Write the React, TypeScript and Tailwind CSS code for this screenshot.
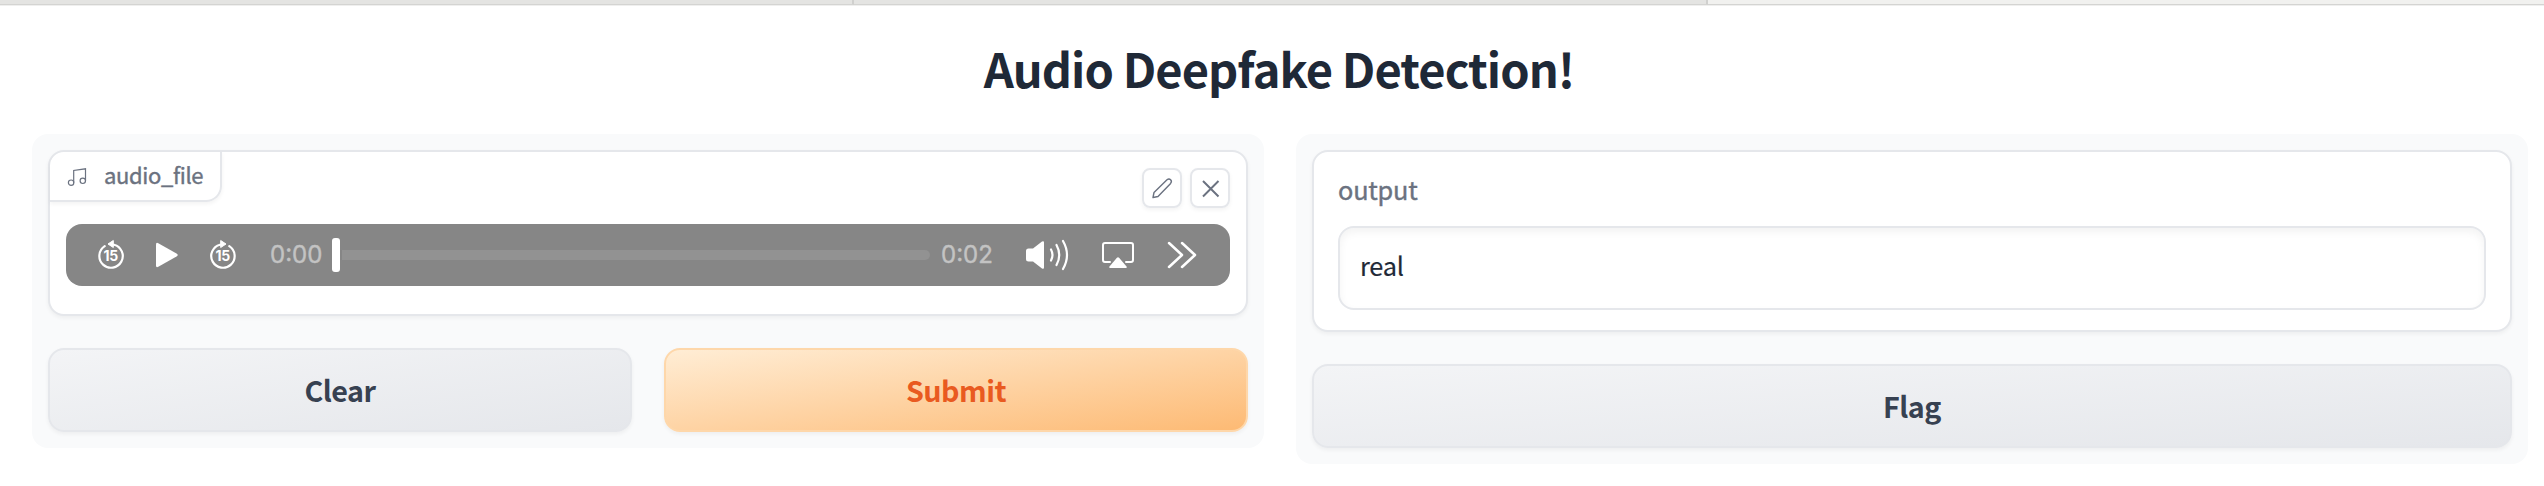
import React from "react";

const sans = "font-['Noto_Sans_CJK_JP','Noto_Sans',sans-serif]";
const card = "rounded-2xl border-2 border-[#e5e7eb] bg-white shadow-[0_2px_4px_rgba(0,0,0,0.05)]";
const button = "flex h-[84px] flex-1 items-center justify-center rounded-2xl border-2 text-[28.7px] font-bold leading-none tracking-[-0.5px] shadow-[0_2px_4px_rgba(0,0,0,0.05)]";
const grayButton = "border-[#e5e7eb] bg-[linear-gradient(to_bottom_right,#f3f4f6,#e5e7eb)] text-[#374151]";
const iconButton = "flex size-10 items-center justify-center rounded-lg border-2 border-[#e5e7eb] shadow-[0_2px_4px_rgba(0,0,0,0.05)]";
const time = "w-[52px] whitespace-nowrap font-[Inter,sans-serif] text-[24px] leading-none text-[#c3c3c3] [-webkit-text-stroke:0.4px]";

function MusicIcon() {
  return (
    <svg className="ml-[16px] size-6" viewBox="0 0 24 24" fill="none" stroke="#6b7280" strokeWidth="1.2">
      <path d="M7.700 18.700V6.500l11.800-1.700v12" />
      <circle cx="5.100" cy="18.700" r="2.700" />
      <circle cx="16.800" cy="16.800" r="2.700" />
    </svg>
  );
}

function SkipIcon({ forward = false }: { forward?: boolean }) {
  return (
    <svg className="h-8 w-7" viewBox="0 0 28 32" fill="none">
      <g transform={forward ? "translate(28 0) scale(-1 1)" : undefined}>
        <path d="M17 5.700A11.700 11.700 0 1 1 7.700 7.200" stroke="#fff" strokeWidth="2.200" strokeLinecap="round" />
        <path d="M11 5 16.300 1.500v7Z" fill="#fff" stroke="#fff" strokeLinejoin="round" />
      </g>
      <text x="13.700" y="22" textAnchor="middle" fill="#fff" fontFamily="Inter, sans-serif" fontSize="14" fontWeight="700" letterSpacing="-0.300">15</text>
    </svg>
  );
}

export default function App() {
  return (
    <div className={`h-[486px] w-full overflow-hidden bg-white ${sans}`}>
      <div className="flex h-[6px] border-b border-[#efefee] bg-[#f1f1ef]">
        <div className="w-[854px] border-b border-r-2 border-b-[#d4d4d2] border-r-[#d0d0ce] bg-[#e4e4e2]" />
        <div className="w-[854px] border-b border-r-2 border-b-[#d4d4d2] border-r-[#d0d0ce] bg-[#e4e4e2]" />
        <div className="flex-1 border-b border-[#d4d4d2]" />
      </div>
      <h1 className="flex h-[128px] items-center justify-center pb-[5px] pl-[14px] text-[47px] font-bold leading-none tracking-[-0.92px] text-[#1f2937]">
        Audio Deepfake Detection!
      </h1>
      <main className="flex items-start gap-8 pl-8 pr-4">
        <section className="flex flex-1 flex-col gap-8 rounded-2xl bg-[#f9fafb] p-4">
          <div className={`relative h-[166px] ${card}`}>
            <div className="absolute left-0 top-0 flex h-[50px] w-[172px] items-center rounded-br-2xl rounded-tl-[14px] border-b-2 border-r-2 border-[#e5e7eb] text-[22px] leading-none tracking-[-0.35px] text-[#6b7280] shadow-[0_2px_4px_rgba(0,0,0,0.05)]">
              <MusicIcon />
              <span className="ml-[14px] pb-[5px] [-webkit-text-stroke:0.4px]">audio_file</span>
            </div>
            <div className="flex justify-end gap-2 pr-4 pt-4">
              <div className={iconButton}>
                <svg className="size-6" viewBox="0 0 24 24" fill="none" stroke="#6b7280" strokeWidth="1.4" strokeLinejoin="round">
                  <path d="M3 21.500l1-5L17 3.800q2-1.600 3.600 0t0 3.600L8 20.500Z" />
                </svg>
              </div>
              <div className={iconButton}>
                <svg className="size-6" viewBox="0 0 24 24" fill="none" stroke="#6b7280" strokeWidth="2">
                  <path d="M5 5l15.500 15.500M20.500 5l-15.500 15.500" />
                </svg>
              </div>
            </div>
            <div className="mx-4 mt-4 flex h-[62px] items-center rounded-2xl bg-[#868686]">
              <div className="ml-[31px] flex"><SkipIcon /></div>
              <svg className="ml-[30px] h-[26px] w-[24px]" viewBox="0 0 24 26" fill="#fff">
                <path d="M1 2.500Q1 0 3.300 1.200L21.500 11.500Q24 13 21.500 14.500L3.300 24.800Q1 26 1 23.500Z" />
              </svg>
              <div className="ml-[30px] flex"><SkipIcon forward /></div>
              <span className={`ml-[33px] ${time}`}>0:00</span>
              <div className="ml-[10px] h-[34px] w-2 rounded-[3px] bg-white" />
              <div className="ml-[2px] h-[10px] flex-1 rounded-r-[5px] bg-[#929292]" />
              <span className={`ml-[11px] ${time}`}>0:02</span>
              <svg className="ml-[32px] h-8 w-[46px]" viewBox="0 0 46 32" fill="none">
                <path d="M1 12Q1 9.500 3.500 9.500H8L17 2.500Q19 1.500 19 3.500V28.500Q19 30.500 17 29.500L8 22.500H3.500Q1 22.500 1 20Z" fill="#fff" />
                <path d="M26 10.500q3 5.500 0 11M31.500 6q5.500 10 0 20M38 2q8 14 0 28" stroke="#fff" strokeWidth="2.200" strokeLinecap="round" />
              </svg>
              <svg className="ml-[30px] h-7 w-[34px]" viewBox="0 0 34 28" fill="none">
                <path d="M9 21H4q-2 0-2-2V4q0-2 2-2h26q2 0 2 2v15q0 2-2 2h-5" stroke="#fff" strokeWidth="2" strokeLinecap="round" />
                <path d="M15.700 17q1.300-1.400 2.600 0l7.200 8.500q1 1.500-.7 1.500H9.200q-1.700 0-.7-1.500Z" fill="#fff" />
              </svg>
              <svg className="ml-[32px] mr-[33px] h-7 w-[30px]" viewBox="0 0 30 28" fill="none" stroke="#fff" strokeWidth="2.500" strokeLinecap="round" strokeLinejoin="round">
                <path d="M2 2l13 12L2 26M15 2l13 12L15 26" />
              </svg>
            </div>
          </div>
          <div className="flex gap-8">
            <button className={`${button} ${grayButton}`}>Clear</button>
            <button className={`${button} border-[#fed7aa] bg-[linear-gradient(to_bottom_right,#ffedd5,#fdba74)] text-[#e95a20]`}>Submit</button>
          </div>
        </section>
        <section className="flex flex-1 flex-col gap-8 rounded-2xl bg-[#f9fafb] p-4">
          <div className={`h-[182px] px-6 ${card}`}>
            <div className="flex h-[74px] items-center pt-[2px] text-[25.3px] leading-none tracking-[-0.2px] text-[#6b7280] [-webkit-text-stroke:0.4px]">output</div>
            <div className="flex h-[84px] items-center rounded-2xl border-2 border-[#e5e7eb] px-5 pb-[5px] text-[25.3px] leading-none tracking-[-0.2px] text-[#1f2937] shadow-[inset_0_4px_8px_rgba(0,0,0,0.05)] [-webkit-text-stroke:0.2px]">real</div>
          </div>
          <div className="flex">
            <button className={`${button} ${grayButton}`}>Flag</button>
          </div>
        </section>
      </main>
    </div>
  );
}
